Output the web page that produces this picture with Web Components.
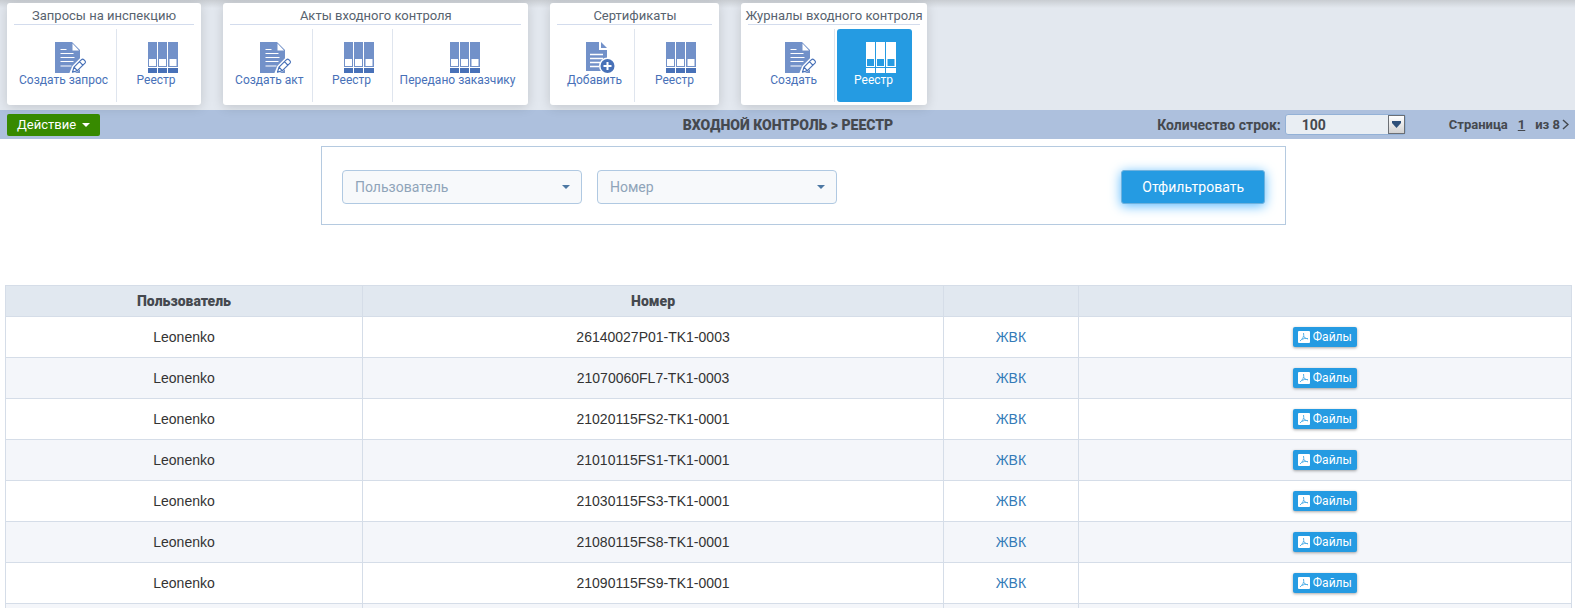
<!DOCTYPE html>
<html lang="ru">
<head>
<meta charset="utf-8">
<title>Входной контроль - Реестр</title>
<style>
	body {
		margin: 0;
		font-family: Roboto, "Liberation Sans", sans-serif;
		background: #fff;
	}
</style>
</head>
<body>

<registry-page>
	<ribbon-bar slot="ribbon">
		<ribbon-group caption="Запросы на инспекцию">
			<ribbon-item icon="create" label="Создать запрос"></ribbon-item>
			<ribbon-item icon="registry" label="Реестр"></ribbon-item>
		</ribbon-group>
		<ribbon-group caption="Акты входного контроля">
			<ribbon-item icon="create" label="Создать акт"></ribbon-item>
			<ribbon-item icon="registry" label="Реестр"></ribbon-item>
			<ribbon-item icon="registry" label="Передано заказчику"></ribbon-item>
		</ribbon-group>
		<ribbon-group caption="Сертификаты">
			<ribbon-item icon="add" label="Добавить"></ribbon-item>
			<ribbon-item icon="registry" label="Реестр"></ribbon-item>
		</ribbon-group>
		<ribbon-group caption="Журналы входного контроля">
			<ribbon-item icon="create" label="Создать"></ribbon-item>
			<ribbon-item icon="registry" label="Реестр" active></ribbon-item>
		</ribbon-group>
	</ribbon-bar>
	<action-bar slot="actions" page="1" pages="8">ВХОДНОЙ КОНТРОЛЬ &gt; РЕЕСТР</action-bar>
	<filter-panel slot="filter">
		<filter-select label="Пользователь"></filter-select>
		<filter-select label="Номер"></filter-select>
	</filter-panel>
	<journal-table></journal-table>
</registry-page>

<script>
const ICONS = {
	create: `
		<svg width="32" height="31" viewBox="0 0 32 31" aria-hidden="true">
			<path fill="var(--icon)" d="M0 0h17l8 8v23H0z"/>
			<path fill="var(--paper)" d="M17.500 1.500v7h6.500z"/>
			<path stroke="var(--paper)" stroke-width="1.200" d="M5.500 7.500h6M5.500 11.500h13M5.500 15.500h14M5.500 19.500h13M5.500 24h11"/>
			<path fill="none" stroke="var(--paper)" stroke-width="4" d="M17 30l2-5 8-8 3 3-9 8z"/>
			<path fill="var(--paper)" stroke="var(--icon-dark)" stroke-width="1.200" stroke-linejoin="round" d="M17.500 30.200l1.500-5 7.500-7.500q1.200-1 2.300 0l1.200 1.200q1 1.100 0 2.200l-7.700 7.500zM19 25.200l3.300 3.400M24.500 19.700l3.500 3.600"/>
		</svg>`,
	add: `
		<svg width="30" height="31" viewBox="0 0 30 31" aria-hidden="true">
			<path fill="var(--icon)" d="M0 0h13v8h8v21H0z"/>
			<path fill="var(--icon)" d="M15 0l6 6h-6z"/>
			<path stroke="var(--paper)" stroke-width="1.300" d="M4 12.500h13M4 16.500h13M4 20.500h10M4 24.500h9"/>
			<circle cx="21.500" cy="24" r="8.500" fill="var(--paper)"/>
			<circle cx="21.500" cy="24" r="7" fill="var(--icon-dark)"/>
			<path stroke="var(--paper)" stroke-width="2" d="M21.500 20v8M17.500 24h8"/>
		</svg>`,
	registry: `
		<svg width="30" height="31" viewBox="0 0 30 31" aria-hidden="true">
			<path fill="var(--icon)" d="M0 0h9v25H0zM10 0h9v25h-9zM20 0h10v25H20z"/>
			<path fill="var(--icon-dark)" d="M0 26h9v5H0zM10 26h9v5h-9zM20 26h10v5H20z"/>
			<path fill="var(--paper)" d="M1 17h7v7H1zM11 17h7v7h-7zM21.500 17h7v7h-7z"/>
		</svg>`,
};

const JOURNAL = [
	'26140027P01-TK1-0003',
	'21070060FL7-TK1-0003',
	'21020115FS2-TK1-0001',
	'21010115FS1-TK1-0001',
	'21030115FS3-TK1-0001',
	'21080115FS8-TK1-0001',
	'21090115FS9-TK1-0001',
];

class BaseView extends HTMLElement {
	constructor() {
		super();
		this.attachShadow({ mode: 'open' });
	}
	
	connectedCallback() {
		const tpl = document.createElement('template');
		tpl.innerHTML = this.render();
		this.shadowRoot.replaceChildren(tpl.content);
	}
}

class RegistryPage extends BaseView {
	render() {
		return `
			<style>
			:host {
				display: flex;
				flex-direction: column;
				height: 100vh;
				overflow: hidden;
			}
			header { flex: none; }
			main {
				flex: 1;
				min-height: 0;
				display: flex;
				flex-direction: column;
				gap: 60px;
				padding: 7px 3px 0 5px;
			}
			</style>
			<header>
				<slot name="ribbon"></slot>
				<slot name="actions"></slot>
			</header>
			<main>
				<slot name="filter"></slot>
				<slot></slot>
			</main>
		`;
	}
}

class RibbonBar extends BaseView {
	render() {
		return `
			<style>
			:host {
				display: flex;
				align-items: flex-start;
				gap: 22px;
				padding: 3px 7px 5px;
				background: linear-gradient(#c9cdd2, #e3e8ef 8px);
			}
			</style>
			<slot></slot>
		`;
	}
}

class RibbonGroup extends BaseView {
	render() {
		return `
			<style>
			:host {
				display: block;
				padding: 5px 7px 3px;
				border-radius: 3px;
				background: #fff;
				box-shadow: 0 2px 12px rgba(0, 0, 0, .15);
			}
			/* long captions may run a little past the rule under them */
			h2 {
				margin: 0 -3px;
				font-size: 13px;
				font-weight: 400;
				line-height: 16px;
				text-align: center;
				white-space: nowrap;
				color: #58636f;
			}
			nav {
				display: flex;
				justify-content: center;
				padding-top: 4px;
				border-top: 1px solid #d3dced;
			}
			</style>
			<h2>${this.getAttribute('caption')}</h2>
			<nav><slot></slot></nav>
		`;
	}
}

class RibbonItem extends BaseView {
	render() {
		return `
			<style>
			:host {
				--icon: #7291c9;
				--icon-dark: #4871b8;
				--paper: #fff;
				display: block;
				color: #4871b8;
			}
			:host([active]) {
				--icon: #fff;
				--icon-dark: #fff;
				--paper: #259be2;
				color: #fff;
			}
			:host(:not(:last-child)) {
				margin-right: 2px;
				padding-right: 2px;
				border-right: 1px solid #dfe5ee;
			}
			a {
				display: flex;
				flex-direction: column;
				align-items: center;
				box-sizing: border-box;
				min-width: 75px;
				height: 73px;
				padding: 13px 6px 0 5px;
				border-radius: 3px;
				font-size: 12px;
				line-height: 14px;
				text-decoration: none;
				white-space: nowrap;
				color: inherit;
			}
			:host([active]) a { background: #259be2; }
			svg { display: block; padding-left: 14px; }
			</style>
			<a href="#">${ICONS[this.getAttribute('icon')]}<span>${this.getAttribute('label')}</span></a>
		`;
	}
}

class ActionBar extends BaseView {
	render() {
		return `
			<style>
			:host {
				display: grid;
				grid-template-columns: 1fr auto 1fr;
				align-items: center;
				height: 29px;
				padding: 0 6px 0 7px;
				background: #adc0dd;
				color: #45494f;
			}
			button {
				display: flex;
				align-items: center;
				justify-self: start;
				gap: 6px;
				height: 22px;
				padding: 0 10px;
				border: 0;
				border-radius: 2px;
				font: 13px Roboto, sans-serif;
				color: #fff;
				background: #378a00;
			}
			h1 {
				margin: 0;
				font-size: 14px;
				font-weight: 900;
			}
			.tools, .rows, .pages {
				display: flex;
				align-items: center;
			}
			.tools {
				justify-self: end;
				gap: 43px;
				font-weight: 700;
			}
			.rows { gap: 4px; font-size: 14px; }
			.box {
				display: grid;
				grid-template-columns: 1fr 17px;
				box-sizing: border-box;
				width: 121px;
				height: 21px;
				border: 1px solid #93b1d6;
				border-radius: 3px;
				background: #e9eef3;
			}
			select {
				grid-area: 1 / 1 / 2 / 3;
				appearance: none;
				padding: 0 16px;
				border: 0;
				background: none;
				font: 700 14px Roboto, sans-serif;
				color: inherit;
			}
			.box svg {
				grid-area: 1 / 2;
				box-sizing: border-box;
				width: 17px;
				height: 19px;
				border: 1px solid #6b6f75;
				background: linear-gradient(#fff, #d2d2d2);
				pointer-events: none;
			}
			.pages { gap: 10px; font-size: 13px; }
			.pages a { color: inherit; }
			.pages .next { display: flex; align-items: center; gap: 2px; text-decoration: none; }
			</style>
			<button type="button">Действие
				<svg width="8" height="4" viewBox="0 0 8 4" aria-hidden="true"><path fill="#fff" d="M0 0h8L4 4z"/></svg>
			</button>
			<h1><slot></slot></h1>
			<div class="tools">
				<div class="rows">
					<label for="rows">Количество строк:</label>
					<div class="box">
						<select id="rows"><option>100</option></select>
						<svg viewBox="0 0 15 17" aria-hidden="true"><path fill="#2f5079" d="M3 5h9v2l-4.500 5L3 7z"/></svg>
					</div>
				</div>
				<div class="pages">
					<span>Страница</span>
					<a href="#">${this.getAttribute('page')}</a>
					<a class="next" href="#" aria-label="Следующая страница">из ${this.getAttribute('pages')}
						<svg width="7" height="11" viewBox="0 0 7 11" aria-hidden="true"><path fill="none" stroke="#45494f" stroke-width="1.500" d="M1 1l5 4.500L1 10"/></svg>
					</a>
				</div>
			</div>
		`;
	}
}

class FilterPanel extends BaseView {
	render() {
		return `
			<style>
			:host {
				display: grid;
				grid-template-columns: 316fr 965fr 286fr;
			}
			form {
				grid-column: 2;
				display: flex;
				gap: 15px;
				padding: 23px 20px 20px;
				border: 1px solid #b5cae0;
			}
			button {
				height: 34px;
				margin-left: auto;
				padding: 0 20px;
				border: 1px solid #6fb2de;
				border-radius: 3px;
				font: 14px Roboto, sans-serif;
				color: #fff;
				background: #259be2;
				box-shadow: 0 2px 12px #5abaff;
			}
			</style>
			<form>
				<slot></slot>
				<button type="button">Отфильтровать</button>
			</form>
		`;
	}
}

class FilterSelect extends BaseView {
	render() {
		const label = this.getAttribute('label');
		return `
			<style>
			:host {
				display: grid;
				grid-template-columns: 1fr 20px;
				align-items: center;
				flex: 0 1 240px;
			}
			select {
				grid-area: 1 / 1 / 2 / 3;
				appearance: none;
				box-sizing: border-box;
				width: 100%;
				height: 34px;
				padding: 0 12px;
				border: 1px solid #b0c9e2;
				border-radius: 4px;
				font: 14px Roboto, sans-serif;
				color: #8fa4b9;
				background: #f7f9fb;
			}
			svg { grid-area: 1 / 2; pointer-events: none; }
			</style>
			<select aria-label="${label}"><option>${label}</option></select>
			<svg width="8" height="4" viewBox="0 0 8 4" aria-hidden="true"><path fill="#4d78a3" d="M0 0h8L4 4z"/></svg>
		`;
	}
}

class FilesButton extends BaseView {
	render() {
		return `
			<style>
			:host { display: inline-block; vertical-align: middle; }
			button {
				display: flex;
				align-items: center;
				gap: 3px;
				height: 20px;
				padding: 0 5px;
				border: 0;
				border-radius: 2px;
				font: 12px Roboto, sans-serif;
				color: #fff;
				background: #259be2;
				box-shadow: 0 1px 3px rgba(0, 0, 0, .35);
			}
			</style>
			<button type="button">
				<svg width="12" height="12" viewBox="0 0 12 12" aria-hidden="true">
					<rect width="12" height="12" rx="1" fill="#fff"/>
					<path fill="none" stroke="#55b1e8" d="M5.500 2q.8 2.500-.5 4.500Q3.500 9 2 10M5.500 5q1 2.500 4.500 3M3.500 8.500Q6 7 10 7.500"/>
				</svg>
				Файлы
			</button>
		`;
	}
}

class JournalTable extends BaseView {
	render() {
		const rows = JOURNAL.map((number) => `
			<tr>
				<td>Leonenko</td>
				<td>${number}</td>
				<td><a href="#">ЖВК</a></td>
				<td><files-button></files-button></td>
			</tr>
		`).join('');
		return `
			<style>
			:host { display: block; }
			table {
				width: 100%;
				table-layout: fixed;
				border-collapse: collapse;
				font: 14px "Liberation Sans", Arial, sans-serif;
				color: #333;
			}
			.user { width: 22.8%; }
			.number { width: 37.1%; }
			.log { width: 8.6%; }
			th, td {
				box-sizing: border-box;
				height: 41px;
				padding: 0;
				border: 1px solid #d5dde8;
				text-align: center;
			}
			th {
				height: 31px;
				font: 900 14px Roboto, sans-serif;
				color: #45494f;
				background: #e1e8f0;
			}
			tbody tr:nth-child(even) { background: #f4f6fa; }
			a { color: #337ab7; text-decoration: none; }
			</style>
			<table>
				<colgroup><col class="user"><col class="number"><col class="log"><col></colgroup>
				<thead>
					<tr><th>Пользователь</th><th>Номер</th><th></th><th></th></tr>
				</thead>
				<tbody>
					${rows}
					<tr><td></td><td></td><td></td><td></td></tr>
				</tbody>
			</table>
		`;
	}
}

window.customElements.define('registry-page', RegistryPage);
window.customElements.define('ribbon-bar', RibbonBar);
window.customElements.define('ribbon-group', RibbonGroup);
window.customElements.define('ribbon-item', RibbonItem);
window.customElements.define('action-bar', ActionBar);
window.customElements.define('filter-panel', FilterPanel);
window.customElements.define('filter-select', FilterSelect);
window.customElements.define('files-button', FilesButton);
window.customElements.define('journal-table', JournalTable);
</script>
</body>
</html>
